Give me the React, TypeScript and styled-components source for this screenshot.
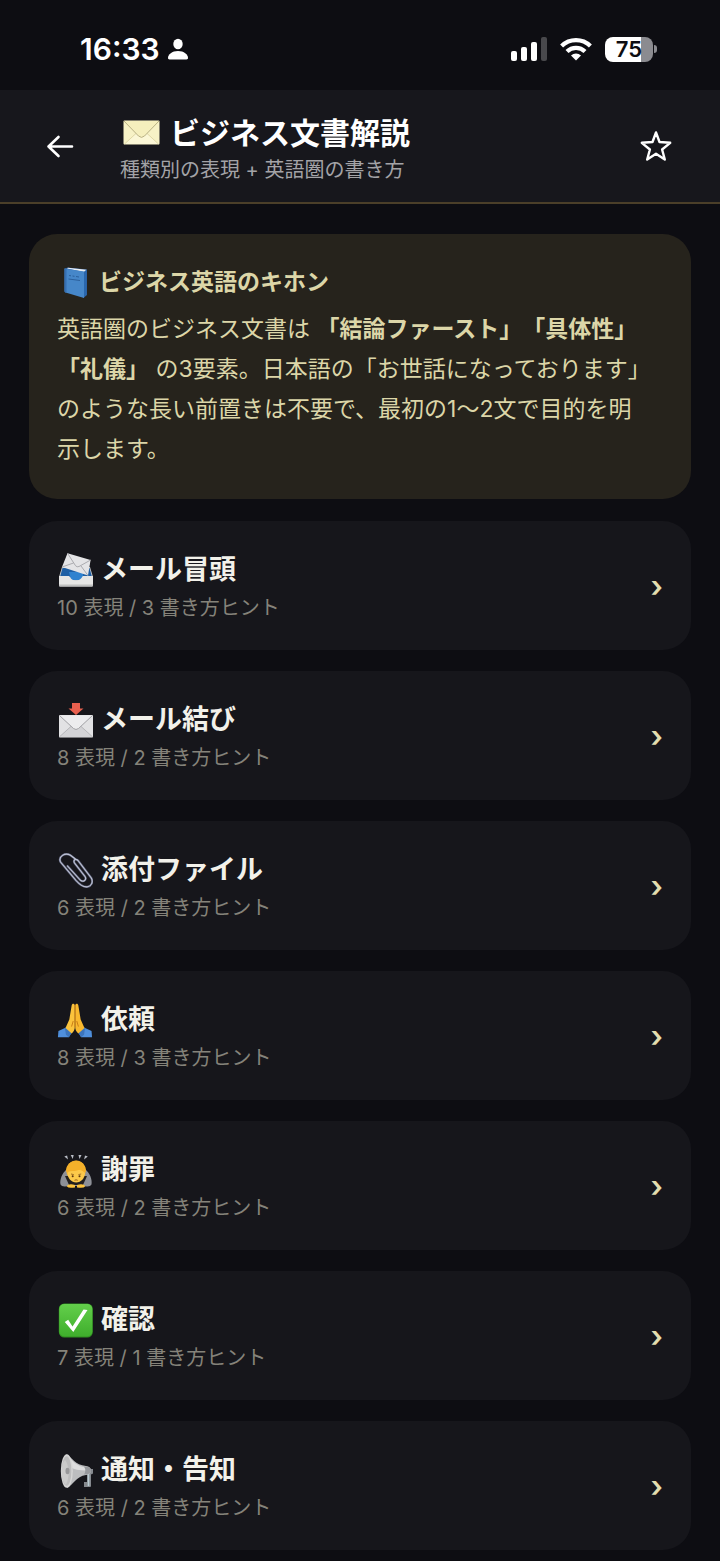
import { ReactNode, useState } from "react";
import styled, { createGlobalStyle } from "styled-components";

const GlobalStyle = createGlobalStyle`
    * {
        box-sizing: border-box;
    }

    body {
        margin: 0;
        background: #0d0d12;
        font-family: Inter, "Noto Sans CJK JP", sans-serif;
        text-spacing-trim: space-all;
    }

    svg {
        display: block;
        flex-shrink: 0;
    }
`;

const Screen = styled.div`
    min-height: 100vh;
    color: #ffffff;
`;

const StatusBar = styled.div`
    display: flex;
    align-items: center;
    justify-content: space-between;
    height: 90px;
    padding: 8px 63px 0 80px;
`;

const StatusGroup = styled.div<{ $gap: number }>`
    display: flex;
    align-items: center;
    gap: ${(p) => p.$gap}px;
`;

const Clock = styled.span`
    font-size: 30px;
    line-height: 32px;
    font-weight: 600;
`;

const Battery = styled.div`
    display: flex;
    align-items: center;
    gap: 1px;
`;

const BatteryBody = styled.div`
    width: 48px;
    border-radius: 8px;
    background: linear-gradient(90deg, #ffffff 75%, #8b8b90 75%);
    color: #0d0d12;
    font-size: 22px;
    line-height: 25px;
    font-weight: 600;
    text-align: center;
`;

const BatteryTip = styled.div`
    width: 3px;
    height: 8px;
    border-radius: 0 4px 4px 0;
    background: #8b8b90;
`;

const Header = styled.header`
    display: flex;
    align-items: center;
    gap: 36px;
    padding: 15px 40px 15px 36px;
    background: #17171c;
    border-bottom: 2px solid #4b3f29;
`;

const IconButton = styled.button`
    display: flex;
    align-items: center;
    justify-content: center;
    width: 48px;
    height: 48px;
    padding: 0;
    border: none;
    background: none;
    color: #ffffff;
    cursor: pointer;
`;

const HeaderText = styled.div`
    flex: 1;
    padding-top: 8px;
`;

const PageTitle = styled.h1`
    display: flex;
    align-items: center;
    gap: 10px;
    margin: 0;
    font-size: 30px;
    line-height: 40px;
    font-weight: 700;
`;

const PageSubtitle = styled.p`
    margin: 0;
    color: #a3a3a7;
    font-size: 20px;
    line-height: 34px;
`;

const Content = styled.main`
    display: flex;
    flex-direction: column;
    gap: 22px;
    padding: 30px 29px 8px;
`;

const InfoCard = styled.section`
    padding: 30px 40px 30px 28px;
    border-radius: 28px;
    background: #26231c;
    color: #dcd6a8;
`;

const InfoTitle = styled.h2`
    display: flex;
    align-items: center;
    gap: 6px;
    margin: 0 0 9px;
    font-size: 23px;
    line-height: 36px;
    font-weight: 700;
`;

const InfoBody = styled.p`
    margin: 0;
    font-size: 23px;
    line-height: 40px;
`;

const CategoryList = styled.ul`
    display: flex;
    flex-direction: column;
    gap: 21px;
    margin: 0;
    padding: 0;
    list-style: none;
`;

const CategoryCard = styled.button`
    display: flex;
    align-items: center;
    justify-content: space-between;
    width: 100%;
    padding: 29px 28px 24px;
    border: none;
    border-radius: 28px;
    background: #16161b;
    color: #f2f1ea;
    font-family: inherit;
    text-align: left;
    cursor: pointer;
`;

const CategoryTitle = styled.span`
    display: flex;
    align-items: center;
    gap: 8px;
    font-size: 27px;
    line-height: 40px;
    font-weight: 700;
`;

const CategoryMeta = styled.span`
    display: block;
    color: #85837a;
    font-size: 20px;
    line-height: 36px;
`;

const Chevron = styled.span`
    padding-bottom: 4px;
    color: #e3deb0;
    font-size: 30px;
    line-height: 36px;
    font-weight: 600;
`;

const PersonIcon = () => (
    <svg width="20" height="22" viewBox="0 0 20 22" fill="#fff">
        <ellipse cx="10" cy="6" rx="4.7" ry="5.3" />
        <path d="M1.6 21.5C.4 21.5 0 20.8 0 19.8 0 16.6 4 13 10 13s10 3.6 10 6.8c0 1-.4 1.7-1.6 1.7z" />
    </svg>
);

const SignalIcon = () => (
    <svg width="36" height="24" viewBox="0 0 36 24" fill="#fff">
        <rect x="0" y="14" width="6" height="10" rx="2" />
        <rect x="10" y="10" width="6" height="14" rx="2" />
        <rect x="20" y="5" width="6" height="19" rx="2" />
        <rect x="30" y="0" width="6" height="24" rx="2" fill="#48484c" />
    </svg>
);

const WifiIcon = () => (
    <svg width="32" height="24" viewBox="0 0 32 24">
        <g fill="none" stroke="#fff" strokeWidth="4.2">
            <path d="M1.6 9a20.6 20.6 0 0 1 28.8 0" />
            <path d="M7 14.6a12.8 12.8 0 0 1 18 0" />
        </g>
        <path d="M16 23.6l-5-5.2a7.2 7.2 0 0 1 10 0z" fill="#fff" />
    </svg>
);

const ArrowIcon = () => (
    <svg
        width="32"
        height="32"
        viewBox="0 0 32 32"
        fill="none"
        stroke="currentColor"
        strokeWidth="2.6"
        strokeLinecap="round"
        strokeLinejoin="round"
    >
        <path d="M28 16.5H4.5M14.5 7L4.5 16.5l10 9.5" />
    </svg>
);

const StarIcon = ({ filled }: { filled: boolean }) => (
    <svg
        width="32"
        height="32"
        viewBox="0 0 32 32"
        fill={filled ? "currentColor" : "none"}
        stroke="currentColor"
        strokeWidth="2.4"
        strokeLinejoin="round"
    >
        <path d="M16 2.5l3.5 9.5 10.7.8-8.1 6.7 2.7 10L16 23.8l-8.800 5.7 2.7-10-8.1-6.7L12.5 12z" />
    </svg>
);

const LetterIcon = () => (
    <svg width="40" height="36" viewBox="0 0 40 36">
        <rect x="3.5" y="5.5" width="36" height="24" rx="1" fill="#f7f2c6" />
        <path d="M4 29l13-11.5h9L39 29z" fill="#fbf7d6" />
        <path
            d="M4.5 29l12.5-11.5M38.5 29L26 17.5"
            stroke="#d8d09a"
            strokeWidth=".8"
        />
        <path
            d="M4 6l14.5 15q3 2.8 6 0L39 6"
            fill="#f5efbd"
            stroke="#b9b184"
            strokeWidth="1"
        />
    </svg>
);

const BookIcon = () => (
    <svg width="36" height="36" viewBox="0 0 36 36">
        <path d="M7.5 5l3-1.5L30 5.5v25.6L26.5 34z" fill="#2d5f9e" />
        <path d="M10 4.5l1-.8 18.5 2L27 8z" fill="#e9edf2" />
        <path d="M27 8l2.5-2.3v25L27 33z" fill="#2a67ad" />
        <path d="M7.5 4.5L27 7.5V34L8.5 28.5q-1-.5-1-1.5z" fill="#4687c9" />
        <path d="M7.5 4.5l2 .3v24L8.5 28.5q-1-.5-1-1.5z" fill="#356fb2" />
        <path
            d="M12 11.5l2 .3m1.5.2l2 .3m1.5.2l3 .5M11.5 15l11.5 1.5"
            stroke="#2c609c"
            strokeWidth="1"
        />
    </svg>
);

const TrayLetterIcon = () => (
    <svg width="36" height="36" viewBox="0 0 36 36">
        <path d="M5 15h28l3 10v8H2v-8z" fill="#c6c8cb" />
        <path d="M5.5 16h27l2.5 9H3z" fill="#1e5fa5" />
        <path d="M12 20h14v5l-3 3h-9z" fill="#2f82cf" />
        <path d="M10.5 1.2L33.6 8 31 23.5 5 15z" fill="#e4e4e6" />
        <path
            d="M10.5 1.2l8 12.5q1.5 1.8 3.5.8L33.6 8M5 15l11.5-4M31 23.5l-7-9.5"
            fill="none"
            stroke="#a4a4a8"
            strokeWidth=".9"
        />
        <path
            d="M2 24h10c1 0 1.2 4.5 7 4.5S25 24 26 24h10v9.5q0 1-1 1H3q-1 0-1-1z"
            fill="#e6e6e5"
        />
        <path d="M2 32.5h34v1q0 1-1 1H3q-1 0-1-1z" fill="#bfc0c0" />
    </svg>
);

const InboundLetterIcon = () => (
    <svg width="36" height="36" viewBox="0 0 36 36">
        <rect x="2" y="13" width="34" height="22.5" rx="1" fill="#e2e2e4" />
        <path d="M2.5 35l13-12h7L35.5 35z" fill="#d3d3d6" />
        <path
            d="M2.5 34.8L15 23.5M35.5 34.8L23 23.5"
            stroke="#acacb0"
            strokeWidth=".8"
        />
        <path
            d="M2.5 13.5l14 13q2.5 2 5 0l14-13"
            fill="#ececee"
            stroke="#a2a2a6"
            strokeWidth="1"
        />
        <path d="M15 1h8v5.5h3.5L19 13l-7.5-6.5H15z" fill="#e8604f" />
    </svg>
);

const clipPath =
    "M19 7.5L13.5 3.3C8 0 1 4.5 3.5 10L19 28.5c4 4.5 7.5 7 11.5 6.3 4-.7 6-4.8 3.8-8.8L21 8.5c-2.5-2.5-5-.5-3.5 2.5L28 24.5c2 3-1.5 6.5-4.8 3.5L10.5 14";

const PaperclipIcon = () => (
    <svg
        width="36"
        height="36"
        viewBox="0 0 36 36"
        fill="none"
        strokeLinecap="round"
        strokeLinejoin="round"
    >
        <path d={clipPath} stroke="#5d6178" strokeWidth="2.2" />
        <path d={clipPath} stroke="#bfc4d6" strokeWidth="1.1" />
    </svg>
);

const PrayIcon = () => (
    <svg width="36" height="36" viewBox="0 0 38 38">
        <path d="M1.5 30.5l8-3.5 6 5.5-3 4.7H1z" fill="#4f8fdc" />
        <path d="M36.5 30.5l-8-3.5-6 5.5 3 4.7H37z" fill="#4f8fdc" />
        <path d="M9.5 27l6 5.5-3 4.7-3-2.7-1-6z" fill="#3c74bb" />
        <path d="M28.5 27l-6 5.5 3 4.7 3-2.7 1-6z" fill="#3c74bb" />
        <path
            d="M18.8 3.5c-.5-2.3-3-2.3-3.3 0L13 18.5 9 27.5l6.500 5.700c2.300-1.700 3.300-4 3.300-7z"
            fill="#fbc33c"
        />
        <path
            d="M19.2 3.5c.5-2.3 3-2.3 3.3 0L25 18.5l4 9-6.500 5.700c-2.300-1.700-3.300-4-3.300-7z"
            fill="#f9b92f"
        />
        <path
            d="M19 3v23M17 20.5l-1.5 5M21 20.5l1.5 5"
            stroke="#c77a14"
            strokeWidth="1"
            strokeLinecap="round"
        />
    </svg>
);

const BowIcon = () => (
    <svg width="36" height="36" viewBox="0 0 36 36">
        <path
            d="M7.3 4.5l2.8-1 .9 4zM13.7 3h3l-1 4zM21.5 3h3l-2 4zM28 3.5l2.8 1-3.7 3z"
            fill="#b9bdc6"
        />
        <path
            d="M10 17C5 21 2.5 28 3.5 32.5q1 2 4 2L19 34l11.5.5q3 0 4-2C35.5 28 33 21 28 17z"
            fill="#8d9097"
        />
        <path d="M8 24l4 9h14l4-9z" fill="#23201f" />
        <circle cx="19" cy="18.5" r="9.8" fill="#f7b32b" />
        <path
            d="M10.5 21c2-3 5-3.5 9-3.5 3 0 6 .5 8.5 3.5 0 5-4 9.5-8.800 9.5S10.5 26 10.5 21z"
            fill="#fcc94a"
        />
        <path
            d="M9.3 20c-.5-6 4-11.5 9.9-11.5S29.3 14 28.7 20c-2.5-.5-4-1.5-5-3-3.5 2.5-9 1.5-14.4 3z"
            fill="#f3b02a"
        />
        <path d="M14 22l2.8.6M24.2 22l-2.8.6" stroke="#8a5a1c" strokeWidth=".8" />
        <circle cx="15.7" cy="24.3" r="1" fill="#5b3510" />
        <circle cx="22.5" cy="24.3" r="1" fill="#5b3510" />
        <path d="M17.5 28.3q1.6-1 3.2 0" stroke="#8a5516" strokeWidth=".9" fill="none" />
        <path
            d="M10 34.5c0-2.5 4.5-3 8-1.5v2.5q-7 1-8-1zM28 34.5c0-2.5-4.5-3-8-1.5v2.5q7 1 8-1z"
            fill="#fcc33d"
        />
    </svg>
);

const CheckIcon = () => (
    <svg width="36" height="36" viewBox="0 0 36 36">
        <defs>
            <linearGradient id="check-fill" x1="0" y1="0" x2="0" y2="1">
                <stop offset="0" stopColor="#63cf4b" />
                <stop offset="1" stopColor="#3fae2c" />
            </linearGradient>
        </defs>
        <rect x="1.8" y="1.5" width="34" height="34" rx="5.5" fill="#2f8f20" />
        <rect x="2.3" y="2" width="33" height="32.5" rx="5" fill="url(#check-fill)" />
        <path d="M7.8 20l3.4-2.2 4.3 6.7L26.5 7.5l4 .5L16.3 30z" fill="#fff" />
    </svg>
);

const MegaphoneIcon = () => (
    <svg width="36" height="36" viewBox="0 0 36 36">
        <path d="M26 17h10v4.5l-2 1V34q0 1-1 1h-6v-5h3v-8h-4z" fill="#85898e" />
        <path d="M31.5 22v12" stroke="#b9cbd2" strokeWidth="1.6" />
        <path
            d="M9.5 2.3C15 5.5 18 13 29 14q5 .5 5 4.5t-5 4.5C19 24.5 16 33 10 36z"
            fill="#bcbdbf"
        />
        <path d="M12 5c4.5 5 8 9.500 18 10.5l-1 3c-7 0-12-1-15-3z" fill="#dededf" />
        <path d="M27 14.5q2.5 4 0 8l4-.5q3-.5 3-3.5t-3-3.5z" fill="#97999d" />
        <ellipse cx="9.8" cy="19" rx="6" ry="16.8" fill="#d6d6d6" />
        <ellipse cx="9.6" cy="19" rx="4.8" ry="14.8" fill="#bdbdbe" />
        <path d="M8 8c4 4 5 17 1 25-5-4-6-20-1-25z" fill="#cbcbcb" />
        <ellipse cx="10.5" cy="19" rx="2" ry="3.3" fill="#98989a" />
    </svg>
);

interface Category {
    icon: ReactNode;
    title: string;
    phrases: number;
    hints: number;
}

const categories: Category[] = [
    { icon: <TrayLetterIcon />, title: "メール冒頭", phrases: 10, hints: 3 },
    { icon: <InboundLetterIcon />, title: "メール結び", phrases: 8, hints: 2 },
    { icon: <PaperclipIcon />, title: "添付ファイル", phrases: 6, hints: 2 },
    { icon: <PrayIcon />, title: "依頼", phrases: 8, hints: 3 },
    { icon: <BowIcon />, title: "謝罪", phrases: 6, hints: 2 },
    { icon: <CheckIcon />, title: "確認", phrases: 7, hints: 1 },
    { icon: <MegaphoneIcon />, title: "通知・告知", phrases: 6, hints: 2 },
];

const App = () => {
    const [starred, setStarred] = useState<boolean>(false);

    return (
        <Screen lang="ja">
            <GlobalStyle />
            <StatusBar>
                <StatusGroup $gap={8}>
                    <Clock>16:33</Clock>
                    <PersonIcon />
                </StatusGroup>
                <StatusGroup $gap={13}>
                    <SignalIcon />
                    <WifiIcon />
                    <Battery>
                        <BatteryBody>75</BatteryBody>
                        <BatteryTip />
                    </Battery>
                </StatusGroup>
            </StatusBar>

            <Header>
                <IconButton type="button" aria-label="戻る">
                    <ArrowIcon />
                </IconButton>
                <HeaderText>
                    <PageTitle>
                        <LetterIcon />
                        ビジネス文書解説
                    </PageTitle>
                    <PageSubtitle>種類別の表現 + 英語圏の書き方</PageSubtitle>
                </HeaderText>
                <IconButton
                    type="button"
                    aria-label="お気に入り"
                    aria-pressed={starred}
                    onClick={() => setStarred(!starred)}
                >
                    <StarIcon filled={starred} />
                </IconButton>
            </Header>

            <Content>
                <InfoCard>
                    <InfoTitle>
                        <BookIcon />
                        ビジネス英語のキホン
                    </InfoTitle>
                    <InfoBody>
                        英語圏のビジネス文書は <strong>「結論ファースト」</strong>
                        <strong>「具体性」</strong>
                        <strong>「礼儀」</strong>{" "}
                        の3要素。日本語の「お世話になっております」のような長い前置きは不要で、最初の1〜2文で目的を明示します。
                    </InfoBody>
                </InfoCard>

                <CategoryList>
                    {categories.map((category) => (
                        <li key={category.title}>
                            <CategoryCard type="button">
                                <span>
                                    <CategoryTitle>
                                        {category.icon}
                                        {category.title}
                                    </CategoryTitle>
                                    <CategoryMeta>
                                        {category.phrases} 表現 / {category.hints}{" "}
                                        書き方ヒント
                                    </CategoryMeta>
                                </span>
                                <Chevron aria-hidden="true">›</Chevron>
                            </CategoryCard>
                        </li>
                    ))}
                </CategoryList>
            </Content>
        </Screen>
    );
};

export default App;
